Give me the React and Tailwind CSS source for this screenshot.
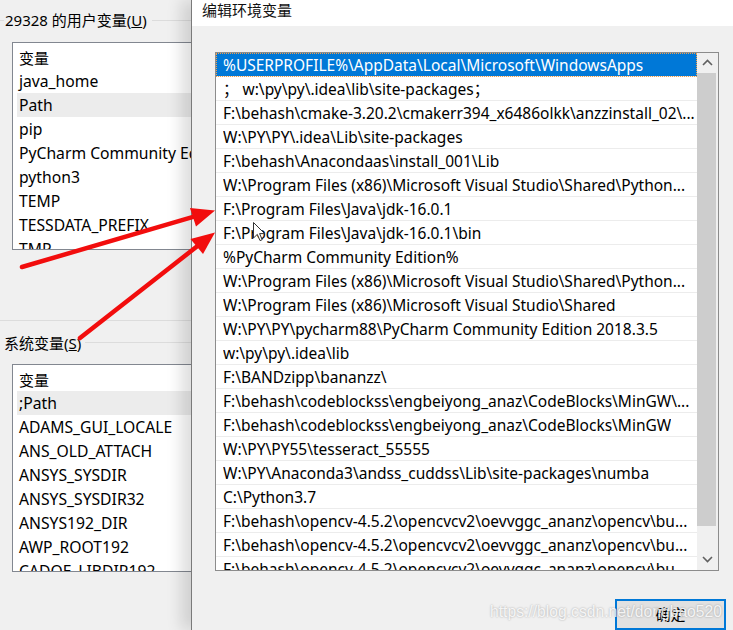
import React from "react";

const userVars = ["java_home", "Path", "pip", "PyCharm Community Edition", "python3", "TEMP", "TESSDATA_PREFIX", "TMP"];
const sysVars = [";Path", "ADAMS_GUI_LOCALE", "ANS_OLD_ATTACH", "ANSYS_SYSDIR", "ANSYS_SYSDIR32", "ANSYS192_DIR", "AWP_ROOT192", "CADOE_LIBDIR192"];

const paths = [
  "%USERPROFILE%\\AppData\\Local\\Microsoft\\WindowsApps",
  "；  w:\\py\\py\\.idea\\lib\\site-packages；",
  "F:\\behash\\cmake-3.20.2\\cmakerr394_x6486olkk\\anzzinstall_02\\...",
  "W:\\PY\\PY\\.idea\\Lib\\site-packages",
  "F:\\behash\\Anacondaas\\install_001\\Lib",
  "W:\\Program Files (x86)\\Microsoft Visual Studio\\Shared\\Python...",
  "F:\\Program Files\\Java\\jdk-16.0.1",
  "F:\\Program Files\\Java\\jdk-16.0.1\\bin",
  "%PyCharm Community Edition%",
  "W:\\Program Files (x86)\\Microsoft Visual Studio\\Shared\\Python...",
  "W:\\Program Files (x86)\\Microsoft Visual Studio\\Shared",
  "W:\\PY\\PY\\pycharm88\\PyCharm Community Edition 2018.3.5",
  "w:\\py\\py\\.idea\\lib",
  "F:\\BANDzipp\\bananzz\\",
  "F:\\behash\\codeblockss\\engbeiyong_anaz\\CodeBlocks\\MinGW\\...",
  "F:\\behash\\codeblockss\\engbeiyong_anaz\\CodeBlocks\\MinGW",
  "W:\\PY\\PY55\\tesseract_55555",
  "W:\\PY\\Anaconda3\\andss_cuddss\\Lib\\site-packages\\numba",
  "C:\\Python3.7",
  "F:\\behash\\opencv-4.5.2\\opencvcv2\\oevvggc_ananz\\opencv\\bu...",
  "F:\\behash\\opencv-4.5.2\\opencvcv2\\oevvggc_ananz\\opencv\\bu...",
  "F:\\behash\\opencv-4.5.2\\opencvcv2\\oevvggc_ananz\\opencv\\bu...",
];

function VarList({ items, highlight }) {
  return (
    <div className="w-[200px] h-[208px] border border-r-0 border-[#828790] bg-white overflow-hidden pt-[2px] pl-[4px] text-[15.7px]">
      <div className="h-6 flex items-center pl-[2px] pt-[2px] text-[15px]">变量</div>
      {items.map((v) => (
        <div
          key={v}
          className={`h-6 flex items-center pl-[2px] pt-[2px] whitespace-nowrap ${v === highlight ? "bg-[#ececec]" : ""}`}
        >
          {v}
        </div>
      ))}
    </div>
  );
}

function Chevron({ up }) {
  return (
    <svg width="11" height="7" viewBox="0 0 11 7">
      <path
        d={up ? "M1 6 L5.5 1.5 L10 6" : "M1 1 L5.5 5.5 L10 1"}
        fill="none"
        stroke="#606060"
        strokeWidth="1.6"
      />
    </svg>
  );
}

export default function App() {
  return (
    <div
      className="relative w-[733px] h-[630px] overflow-hidden bg-[#f0f0f0] flex text-[15px] text-black"
      style={{ fontFamily: '"Noto Sans", "Noto Sans CJK SC", sans-serif' }}
    >
      {/* left: environment variables window behind */}
      <div className="w-[191px] shrink-0 overflow-hidden">
        <div className="mt-[9px] h-[22px] flex items-center">
          <div className="w-[4px] h-px bg-[#dcdcdc]" />
          <span className="whitespace-nowrap px-[1px]">
            29328 的用户变量(<span className="underline">U</span>)
          </span>
          <div className="flex-1 h-px bg-[#dcdcdc] ml-[4px]" />
        </div>
        <div className="mt-[11px] ml-[12px]">
          <VarList items={userVars} highlight="Path" />
        </div>
        <div className="mt-[70px] h-px bg-[#dcdcdc]" />
        <div className="mt-[11px] h-[22px] flex items-center">
          <span className="whitespace-nowrap pl-[4px]">
            系统变量(<span className="underline">S</span>)
          </span>
          <div className="flex-1 h-px bg-[#dcdcdc] ml-[4px] -mt-[2px]" />
        </div>
        <div className="mt-[10px] ml-[12px]">
          <VarList items={sysVars} highlight=";Path" />
        </div>
      </div>

      {/* edit dialog */}
      <div className="relative flex-1 flex flex-col border-l border-[#7a7a7a] shadow-[-10px_0_14px_rgba(0,0,0,0.13)]">
        <div className="h-[27px] bg-white pl-[10px] leading-[20px] text-[#111]">编辑环境变量</div>
        <div className="mt-[26px] ml-[23px] w-[504px] h-[519px] border border-[#8c8c8c] bg-white flex">
          <div className="flex-1 overflow-hidden text-[15.5px]">
            {paths.map((p, i) => (
              <div
                key={i}
                className={`h-6 flex items-center pl-[7px] pr-[1px] pt-[2px] whitespace-nowrap overflow-hidden border-b border-[#ececec] ${
                  i === 0 ? "bg-[#0078d7] text-white outline-1 outline-dotted outline-[#f5a04a] -outline-offset-1" : ""
                }`}
              >
                <span className="truncate">{p}</span>
              </div>
            ))}
          </div>
          <div className="w-[21px] bg-[#f0f0f0] flex flex-col">
            <div className="h-[20px] flex items-center justify-center">
              <Chevron up />
            </div>
            <div className="h-[453px] w-[19px] bg-[#cdcdcd]" />
            <div className="flex-1 flex items-end justify-center pb-[7px]">
              <Chevron />
            </div>
          </div>
        </div>
        <div className="mt-[28px] ml-auto mr-[7px] w-[111px] h-[32px] border-2 border-[#0078d7] bg-[#e1e1e1] flex items-start justify-center pt-[2px]">
          确定
        </div>
      </div>

      {/* annotation arrows */}
      <svg className="absolute inset-0 pointer-events-none" width="733" height="630">
        <line x1="22" y1="267" x2="194" y2="216.6" stroke="#f20d0d" strokeWidth="4.5" strokeLinecap="round" />
        <polygon points="215,210.5 196,226.5 190,208" fill="#f20d0d" />
        <line x1="80" y1="338" x2="197.5" y2="246" stroke="#f20d0d" strokeWidth="4.5" strokeLinecap="round" />
        <polygon points="215,232.5 203,254 190.5,239" fill="#f20d0d" />
      </svg>

      {/* mouse cursor */}
      <svg className="absolute left-[253px] top-[222px] pointer-events-none" width="13" height="21" viewBox="0 0 13 21">
        <path d="M0.5 0.5 L0.5 16 L4.3 12.4 L7 18.6 L9.2 17.7 L6.6 11.6 L11.6 11.6 Z" fill="white" stroke="#333" strokeWidth="1" />
      </svg>

      {/* watermark */}
      <div
        className="absolute left-[490px] top-[600px] text-[15.7px] text-white/85 whitespace-nowrap [text-shadow:0_0_2px_rgba(0,0,0,0.35)]"
        style={{ fontFamily: '"Liberation Sans", Arial, sans-serif' }}
      >
        https://blog.csdn.net/dongbao520
      </div>
    </div>
  );
}
